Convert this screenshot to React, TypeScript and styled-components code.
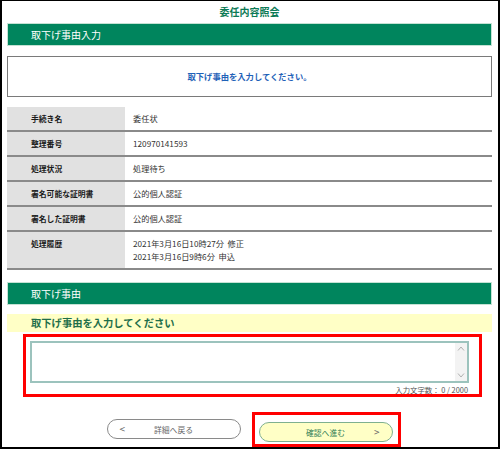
import React, { FC } from "react";
import styled, { createGlobalStyle } from "styled-components";

const GlobalStyle = createGlobalStyle`
    html, body {
        margin: 0;
        padding: 0;
        background: #ffffff;
    }
    body {
        font-family: "Noto Sans CJK JP", "Noto Sans", sans-serif;
    }
`

const Frame = styled.div`
    box-sizing: border-box;
    width: 500px;
    height: 449px;
    border-top: 1px solid #000;
    border-left: 2px solid #000;
    border-right: 2px solid #000;
    border-bottom: 2px solid #000;
    padding: 0 6px 0 5px;
    display: flex;
    flex-direction: column;
`

const PageTitle = styled.div`
    height: 26px;
    line-height: 22px;
    text-align: center;
    color: #0b7a55;
    font-size: 10px;
    font-weight: 700;
`

const SectionBar = styled.div<{ $mt: number }>`
    box-sizing: border-box;
    height: 24px;
    margin-top: ${(p) => p.$mt}px;
    background: #00855d;
    border: 1px solid #c4e2d4;
    color: #ffffff;
    font-size: 10px;
    line-height: 21px;
    padding-left: 23px;
`

const MessageBox = styled.div`
    box-sizing: border-box;
    height: 47px;
    margin-top: 10px;
    border: 1px solid #7a7a7a;
    display: flex;
    align-items: center;
    justify-content: center;
    color: #1f62b8;
    font-size: 8.3px;
    font-weight: 700;
`

const InfoTable = styled.div`
    margin-top: 10px;
    display: flex;
    flex-direction: column;
`

const InfoRow = styled.div<{ $h: number }>`
    display: grid;
    grid-template-columns: 118px 1fr;
    height: ${(p) => p.$h}px;
    border-bottom: 2px solid #8a8a8a;
`

const LabelCell = styled.div`
    background: #e1e1e1;
    padding: 6px 0 0 24px;
    font-size: 7.8px;
    font-weight: 700;
    color: #1a1a1a;
`

const ValueCell = styled.div`
    padding: 5px 0 0 8px;
    font-size: 8.2px;
    color: #333;
    line-height: 13px;
`

const PromptBand = styled.div`
    height: 19px;
    margin-top: 9px;
    background: #ffffc6;
    color: #1f6f4a;
    font-size: 10.3px;
    font-weight: 700;
    line-height: 18px;
    padding-left: 24px;
`

const HighlightBox = styled.div`
    box-sizing: border-box;
    border: 3px solid #ff0000;
`

const ReasonBox = styled(HighlightBox)`
    margin: 2px 10px 0 16px;
    height: 63px;
    padding: 4px 10px 0 4px;
    display: flex;
    flex-direction: column;
`

const InputFrame = styled.div`
    box-sizing: border-box;
    width: 439px;
    height: 42px;
    border: 2px solid #9cc3bd;
    display: flex;
`

const ReasonInput = styled.textarea`
    flex: 1;
    border: none;
    resize: none;
    outline: none;
    margin: 0;
    padding: 2px;
    font-family: inherit;
    overflow: hidden;
`

const ScrollTrack = styled.div`
    width: 12px;
    background: #f3f3f3;
    display: flex;
    flex-direction: column;
    justify-content: space-between;
    align-items: center;
    padding: 3px 0;
`

const Counter = styled.div`
    text-align: right;
    font-size: 7.4px;
    color: #555;
    margin-top: 1px;
    padding-right: 1px;
`

const ButtonRow = styled.div`
    margin-top: 15px;
    display: flex;
    justify-content: center;
    align-items: center;
    gap: 11px;
    padding-left: 8px;
`

const PillButton = styled.button<{ $primary?: boolean }>`
    box-sizing: border-box;
    width: 134px;
    height: 20px;
    border-radius: 10px;
    border: 1px solid ${(p) => (p.$primary ? "#7fb08f" : "#8a8a8a")};
    background: ${(p) => (p.$primary ? "#ffffc6" : "#ffffff")};
    color: ${(p) => (p.$primary ? "#2f7d55" : "#666")};
    font-family: inherit;
    font-size: 7.8px;
    position: relative;
    padding: 0;
    cursor: pointer;
`

const Arrow = styled.span<{ $side: "left" | "right" }>`
    position: absolute;
    top: 50%;
    transform: translateY(-55%);
    ${(p) => (p.$side === "left" ? "left: 12px;" : "right: 12px;")}
    font-size: 10px;
    color: #666;
`

const NextWrap = styled(HighlightBox)`
    padding: 2px 5px 2px 4px;
`

const Chevron: FC<{ up?: boolean }> = ({ up }) => (
    <svg width="8" height="5" viewBox="0 0 8 5">
        <path
            d={up ? "M1 4.5 L4 1 L7 4.5" : "M1 0.5 L4 4 L7 0.5"}
            fill="none"
            stroke="#b0b0b0"
            strokeWidth="1"
        />
    </svg>
)

const rows: { label: string; value: React.ReactNode; h: number }[] = [
    { label: "手続き名", value: "委任状", h: 23 },
    { label: "整理番号", value: "120970141593", h: 23 },
    { label: "処理状況", value: "処理待ち", h: 23 },
    { label: "署名可能な証明書", value: "公的個人認証", h: 23 },
    { label: "署名した証明書", value: "公的個人認証", h: 23 },
    {
        label: "処理履歴",
        value: (
            <>
                2021年3月16日10時27分&nbsp;&nbsp;修正
                <br />
                2021年3月16日9時6分&nbsp;&nbsp;申込
            </>
        ),
        h: 36,
    },
]

const App: FC = () => {
    return (
        <>
            <GlobalStyle />
            <Frame>
                <PageTitle>委任内容照会</PageTitle>
                <SectionBar $mt={0}>取下げ事由入力</SectionBar>
                <MessageBox>取下げ事由を入力してください。</MessageBox>
                <InfoTable>
                    {rows.map((r) => (
                        <InfoRow key={r.label} $h={r.h}>
                            <LabelCell>{r.label}</LabelCell>
                            <ValueCell>{r.value}</ValueCell>
                        </InfoRow>
                    ))}
                </InfoTable>
                <SectionBar $mt={12}>取下げ事由</SectionBar>
                <PromptBand>取下げ事由を入力してください</PromptBand>
                <ReasonBox>
                    <InputFrame>
                        <ReasonInput />
                        <ScrollTrack>
                            <Chevron up />
                            <Chevron />
                        </ScrollTrack>
                    </InputFrame>
                    <Counter>入力文字数： 0 / 2000</Counter>
                </ReasonBox>
                <ButtonRow>
                    <PillButton>
                        <Arrow $side="left">&lt;</Arrow>
                        詳細へ戻る
                    </PillButton>
                    <NextWrap>
                        <PillButton $primary>
                            確認へ進む
                            <Arrow $side="right">&gt;</Arrow>
                        </PillButton>
                    </NextWrap>
                </ButtonRow>
            </Frame>
        </>
    )
}

export default App
